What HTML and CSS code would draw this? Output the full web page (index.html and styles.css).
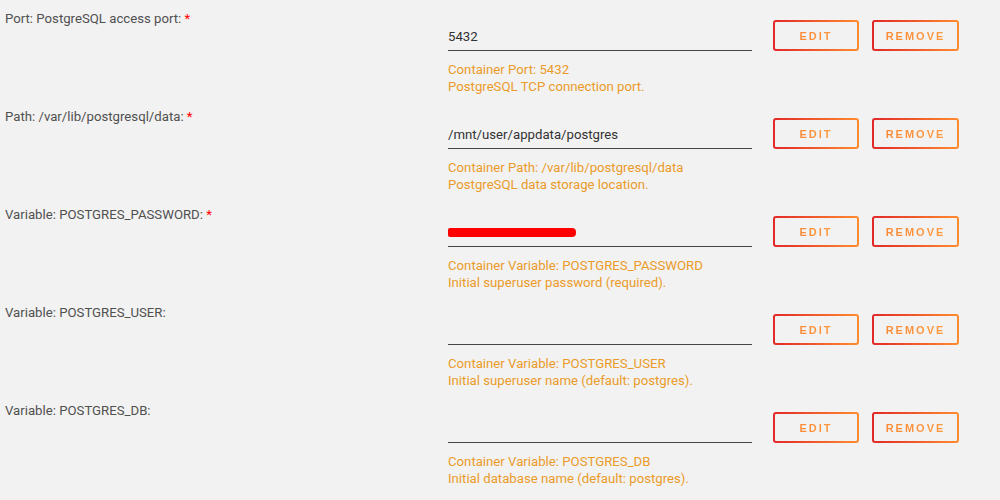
FILE: index.html
```html
<!DOCTYPE html>
<html lang="en">
<head>
    <meta charset="UTF-8">
    <meta name="viewport" content="width=device-width, initial-scale=1.0">
    <title>Container Settings</title>
    <link rel="stylesheet" href="styles.css">
</head>
<body>
    <div class="config">
        <div class="row">
            <div class="label">Port: PostgreSQL access port: <span class="req">*</span></div>
            <div class="field">
                <div class="input">5432</div>
                <div class="help">Container Port: 5432<br>PostgreSQL TCP connection port.</div>
            </div>
            <div class="actions">
                <button class="btn"><span>EDIT</span></button>
                <button class="btn btn-remove"><span>REMOVE</span></button>
            </div>
        </div>
        <div class="row">
            <div class="label">Path: /var/lib/postgresql/data: <span class="req">*</span></div>
            <div class="field">
                <div class="input">/mnt/user/appdata/postgres</div>
                <div class="help">Container Path: /var/lib/postgresql/data<br>PostgreSQL data storage location.</div>
            </div>
            <div class="actions">
                <button class="btn"><span>EDIT</span></button>
                <button class="btn btn-remove"><span>REMOVE</span></button>
            </div>
        </div>
        <div class="row">
            <div class="label">Variable: POSTGRES_PASSWORD: <span class="req">*</span></div>
            <div class="field">
                <div class="input"><span class="redacted"></span></div>
                <div class="help">Container Variable: POSTGRES_PASSWORD<br>Initial superuser password (required).</div>
            </div>
            <div class="actions">
                <button class="btn"><span>EDIT</span></button>
                <button class="btn btn-remove"><span>REMOVE</span></button>
            </div>
        </div>
        <div class="row">
            <div class="label">Variable: POSTGRES_USER:</div>
            <div class="field">
                <div class="input"></div>
                <div class="help">Container Variable: POSTGRES_USER<br>Initial superuser name (default: postgres).</div>
            </div>
            <div class="actions">
                <button class="btn"><span>EDIT</span></button>
                <button class="btn btn-remove"><span>REMOVE</span></button>
            </div>
        </div>
        <div class="row">
            <div class="label">Variable: POSTGRES_DB:</div>
            <div class="field">
                <div class="input"></div>
                <div class="help">Container Variable: POSTGRES_DB<br>Initial database name (default: postgres).</div>
            </div>
            <div class="actions">
                <button class="btn"><span>EDIT</span></button>
                <button class="btn btn-remove"><span>REMOVE</span></button>
            </div>
        </div>
    </div>
</body>
</html>
```

FILE: styles.css
```css
body {
    margin: 0;
    background-color: #f2f2f2;
    font-family: Roboto, "Liberation Sans", sans-serif;
    font-size: 13.2px;
    color: #505050;
}
.row {
    display: flex;
    height: 98px;
}
.label {
    width: 443px;
    padding-left: 5px;
    padding-top: 10px;
    line-height: 17px;
}
.req {
    color: #ff0000;
}
.field {
    width: 304px;
    padding-top: 24px;
}
.input {
    height: 26px;
    line-height: 26px;
    border-bottom: 1px solid #444;
    color: #333;
}
.redacted {
    display: inline-block;
    width: 128px;
    height: 9px;
    background: #ff0000;
    border-radius: 2px 4px 4px 2px;
    vertical-align: middle;
    margin-top: -3px;
}
.help {
    margin-top: 10px;
    line-height: 17px;
    color: #eb9b2a;
}
.actions {
    display: flex;
    gap: 13px;
    margin-left: 21px;
    padding-top: 20px;
    align-items: flex-start;
}
.btn {
    width: 86px;
    height: 31px;
    padding: 0;
    border: 2px solid transparent;
    border-radius: 3px;
    background: linear-gradient(#f2f2f2, #f2f2f2) padding-box,
                linear-gradient(90deg, #e22828, #ff8c2f) border-box;
    font-family: "Liberation Sans", sans-serif;
    font-size: 11px;
    font-weight: bold;
    letter-spacing: 2px;
    cursor: pointer;
}
.btn-remove {
    width: 87px;
}
.btn span {
    background: linear-gradient(90deg, #f98a35, #ff9a40);
    -webkit-background-clip: text;
    background-clip: text;
    color: transparent;
}
```
